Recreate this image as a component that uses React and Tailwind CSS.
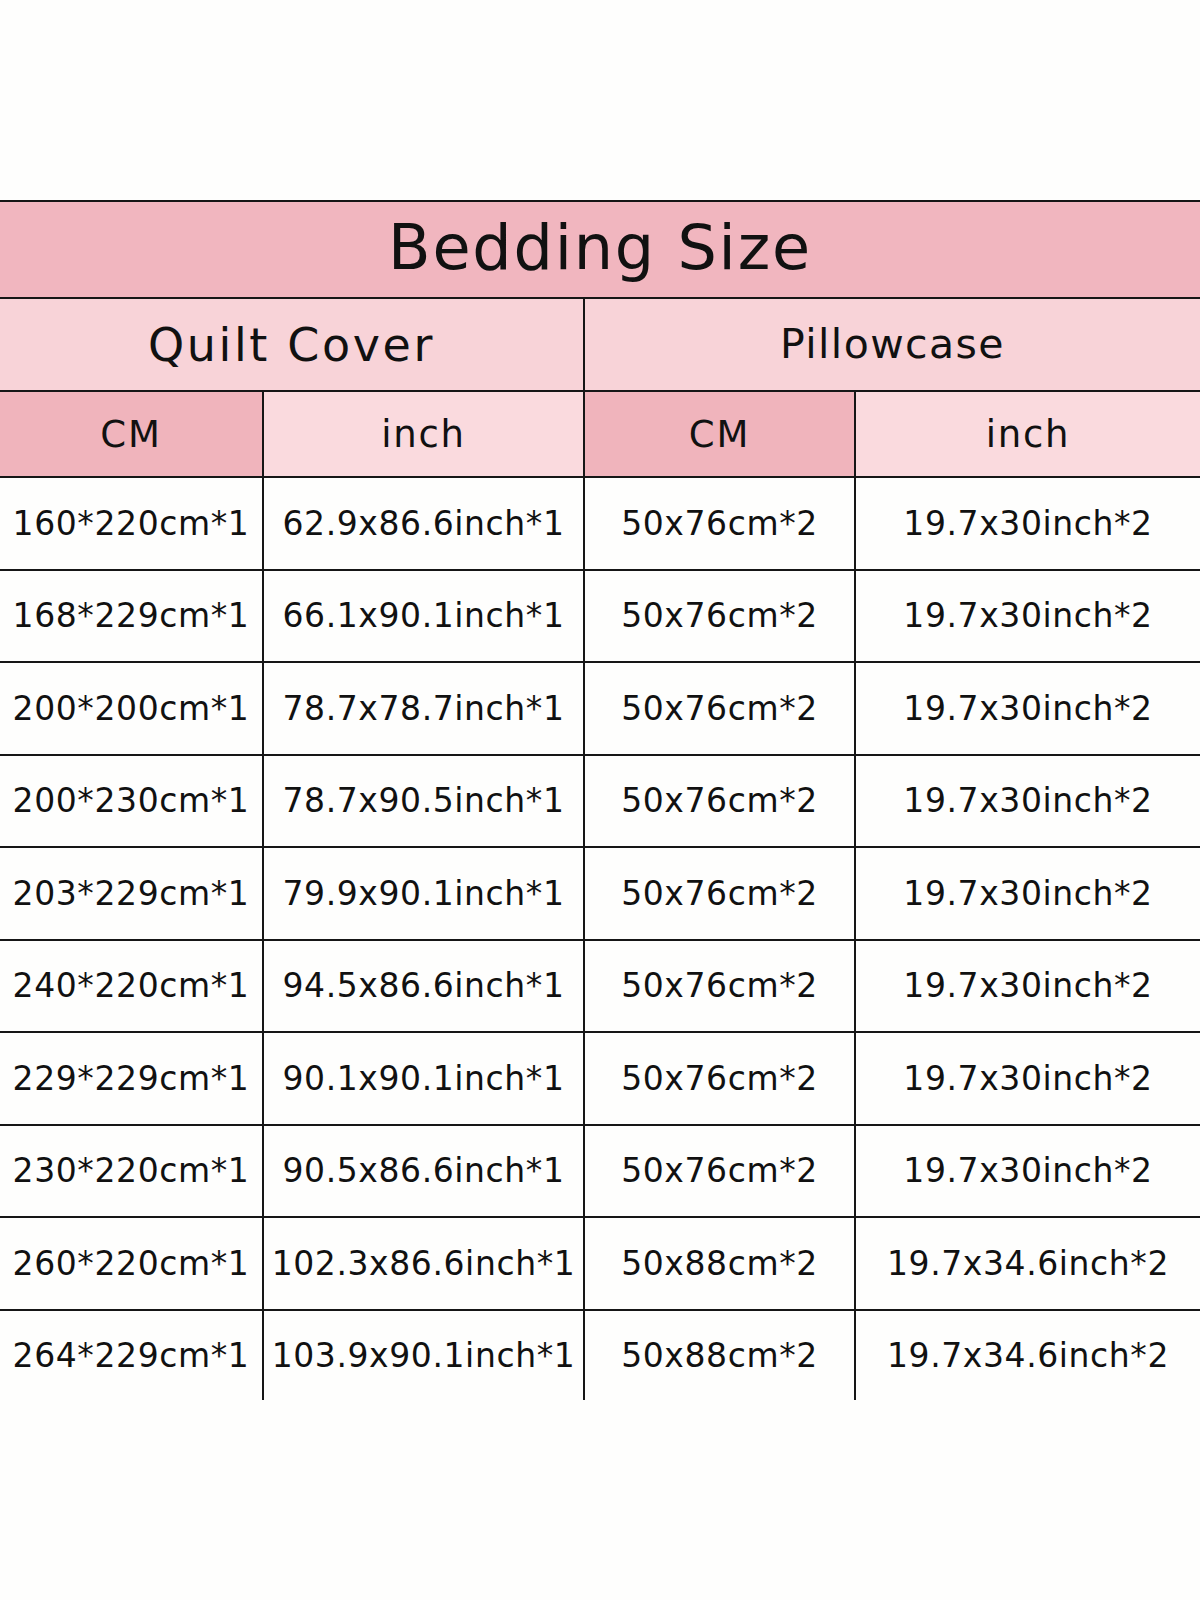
const ROWS = [
  ["160*220cm*1", "62.9x86.6inch*1", "50x76cm*2", "19.7x30inch*2"],
  ["168*229cm*1", "66.1x90.1inch*1", "50x76cm*2", "19.7x30inch*2"],
  ["200*200cm*1", "78.7x78.7inch*1", "50x76cm*2", "19.7x30inch*2"],
  ["200*230cm*1", "78.7x90.5inch*1", "50x76cm*2", "19.7x30inch*2"],
  ["203*229cm*1", "79.9x90.1inch*1", "50x76cm*2", "19.7x30inch*2"],
  ["240*220cm*1", "94.5x86.6inch*1", "50x76cm*2", "19.7x30inch*2"],
  ["229*229cm*1", "90.1x90.1inch*1", "50x76cm*2", "19.7x30inch*2"],
  ["230*220cm*1", "90.5x86.6inch*1", "50x76cm*2", "19.7x30inch*2"],
  ["260*220cm*1", "102.3x86.6inch*1", "50x88cm*2", "19.7x34.6inch*2"],
  ["264*229cm*1", "103.9x90.1inch*1", "50x88cm*2", "19.7x34.6inch*2"],
];

const COLS = "grid grid-cols-[264px_321px_271px_344px]";

export default function App() {
  return (
    <div className="w-[1200px] min-h-[1600px] bg-[#fefefd] pt-[200px] text-[#111] font-['DejaVu_Sans',sans-serif]">
      <div className="w-[1200px]">
        {/* title */}
        <div className="h-[99px] border-y-2 border-[#161616] bg-[#f1b6bf] flex items-center justify-center">
          <span className="text-[62px] leading-none tracking-[1.8px] pb-1">Bedding Size</span>
        </div>

        {/* product groups */}
        <div className="grid grid-cols-[585px_615px] h-[93px] border-b-2 border-[#161616] bg-[#f8d3d8]">
          <div className="border-r-2 border-[#161616] flex items-center justify-center">
            <span className="text-[46px] leading-none tracking-[2.6px]">Quilt Cover</span>
          </div>
          <div className="flex items-center justify-center">
            <span className="text-[41px] leading-none tracking-[1.4px]">Pillowcase</span>
          </div>
        </div>

        {/* units */}
        <div className={`${COLS} h-[86px] border-b-2 border-[#161616]`}>
          <UnitCell label="CM" dark />
          <UnitCell label="inch" />
          <UnitCell label="CM" dark />
          <UnitCell label="inch" />
        </div>

        {/* sizes */}
        {ROWS.map((r, i) => {
          const last = i === ROWS.length - 1;
          return (
            <div
              key={i}
              className={`${COLS} ${last ? "h-[89.5px]" : "h-[92.5px] border-b-2 border-[#161616]"}`}
            >
              {r.map((v, j) => (
                <div
                  key={j}
                  className={`flex items-center justify-center whitespace-nowrap ${j < 3 ? "border-r-2 border-[#161616]" : ""}`}
                >
                  <span className="text-[33px] leading-none tracking-[0.6px]">{v}</span>
                </div>
              ))}
            </div>
          );
        })}
      </div>
    </div>
  );
}

function UnitCell({ label, dark }) {
  return (
    <div
      className={`flex items-center justify-center border-r-2 border-[#161616] last:border-r-0 ${dark ? "bg-[#f0b4bc]" : "bg-[#fadade]"}`}
    >
      <span className="text-[37px] leading-none tracking-[1.8px]">{label}</span>
    </div>
  );
}
